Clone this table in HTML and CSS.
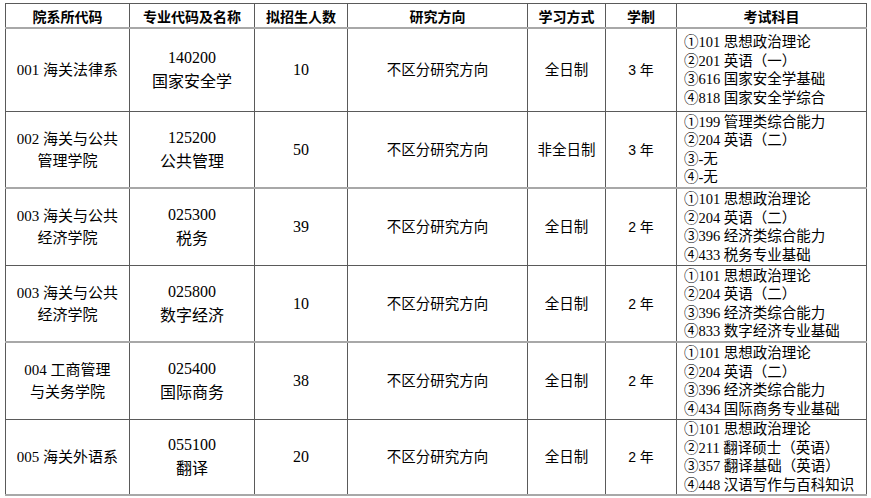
FILE: index.html
```html
<!DOCTYPE html>
<html lang="zh">
<head>
<meta charset="utf-8">
<link rel="stylesheet" href="styles.css">
</head>
<body>
<table class="plan">
  <colgroup>
    <col class="c1"><col class="c2"><col class="c3"><col class="c4"><col class="c5"><col class="c6"><col class="c7">
  </colgroup>
  <tr class="head line-light">
    <th>院系所代码</th><th>专业代码及名称</th><th>拟招生人数</th><th>研究方向</th><th>学习方式</th><th>学制</th><th>考试科目</th>
  </tr>
  <tr class="r1 line-dark">
    <td class="dept">001 海关法律系</td>
    <td class="major"><span class="num">140200</span><br>国家安全学</td>
    <td class="count">10</td>
    <td class="dir">不区分研究方向</td>
    <td class="mode">全日制</td>
    <td class="len">3 年</td>
    <td class="exam">①101 思想政治理论<br>②201 英语（一）<br>③616 国家安全学基础<br>④818 国家安全学综合</td>
  </tr>
  <tr class="r2 line-light">
    <td class="dept">002 海关与公共<br>管理学院</td>
    <td class="major"><span class="num">125200</span><br>公共管理</td>
    <td class="count">50</td>
    <td class="dir">不区分研究方向</td>
    <td class="mode">非全日制</td>
    <td class="len">3 年</td>
    <td class="exam">①199 管理类综合能力<br>②204 英语（二）<br>③-无<br>④-无</td>
  </tr>
  <tr class="r3 line-dark">
    <td class="dept">003 海关与公共<br>经济学院</td>
    <td class="major"><span class="num">025300</span><br>税务</td>
    <td class="count">39</td>
    <td class="dir">不区分研究方向</td>
    <td class="mode">全日制</td>
    <td class="len">2 年</td>
    <td class="exam">①101 思想政治理论<br>②204 英语（二）<br>③396 经济类综合能力<br>④433 税务专业基础</td>
  </tr>
  <tr class="r4 line-light">
    <td class="dept">003 海关与公共<br>经济学院</td>
    <td class="major"><span class="num">025800</span><br>数字经济</td>
    <td class="count">10</td>
    <td class="dir">不区分研究方向</td>
    <td class="mode">全日制</td>
    <td class="len">2 年</td>
    <td class="exam">①101 思想政治理论<br>②204 英语（二）<br>③396 经济类综合能力<br>④833 数字经济专业基础</td>
  </tr>
  <tr class="r5 line-dark">
    <td class="dept">004 工商管理<br>与关务学院</td>
    <td class="major"><span class="num">025400</span><br>国际商务</td>
    <td class="count">38</td>
    <td class="dir">不区分研究方向</td>
    <td class="mode">全日制</td>
    <td class="len">2 年</td>
    <td class="exam">①101 思想政治理论<br>②204 英语（二）<br>③396 经济类综合能力<br>④434 国际商务专业基础</td>
  </tr>
  <tr class="r6 line-light">
    <td class="dept">005 海关外语系</td>
    <td class="major"><span class="num">055100</span><br>翻译</td>
    <td class="count">20</td>
    <td class="dir">不区分研究方向</td>
    <td class="mode">全日制</td>
    <td class="len">2 年</td>
    <td class="exam">①101 思想政治理论<br>②211 翻译硕士（英语）<br>③357 翻译基础（英语）<br>④448 汉语写作与百科知识</td>
  </tr>
</table>
</body>
</html>
```

FILE: styles.css
```css
html, body {
  margin: 0;
  padding: 0;
  background: #ffffff;
}
body {
  padding: 3px 0 0 5px;
  font-family: "Liberation Serif", "Noto Sans CJK SC", serif;
  color: #000;
}
.plan {
  border-collapse: collapse;
  table-layout: fixed;
  width: 862px;
}
.c1 { width: 124px; }
.c2 { width: 125px; }
.c3 { width: 93px; }
.c4 { width: 180px; }
.c5 { width: 78px; }
.c6 { width: 71px; }
.c7 { width: 190px; }

.plan th, .plan td {
  border-left: 1px solid #5a5a5a;
  border-right: 1px solid #5a5a5a;
  padding: 0;
  text-align: center;
  vertical-align: middle;
  font-size: 14.5px;
  line-height: 22px;
}
.plan tr.head th {
  border-top: 1px solid #5a5a5a;
  font-family: "Noto Sans CJK SC", sans-serif;
  font-weight: bold;
  font-size: 14px;
  height: 23px;
  line-height: 20px;
}
.line-light th, .line-light td { border-bottom: 2px solid #a8a8a8; }
.line-dark td { border-bottom: 1px solid #5a5a5a; }

.r1 td { height: 82px; }
.r2 td { height: 75px; }
.r3 td { height: 76px; }
.r4 td { height: 75px; }
.r5 td { height: 76px; }
.r6 td { height: 74px; }

.plan td.dept { font-size: 15px; }
.plan td.major {
  font-size: 16px;
  line-height: 24px;
}
.plan td.count { font-size: 16px; }
.plan td.len { font-family: "Liberation Sans", "Noto Sans CJK SC", sans-serif; font-size: 14px; }
.plan td.exam {
  text-align: left;
  padding-left: 7px;
  line-height: 18.5px;
  white-space: nowrap;
}
```
